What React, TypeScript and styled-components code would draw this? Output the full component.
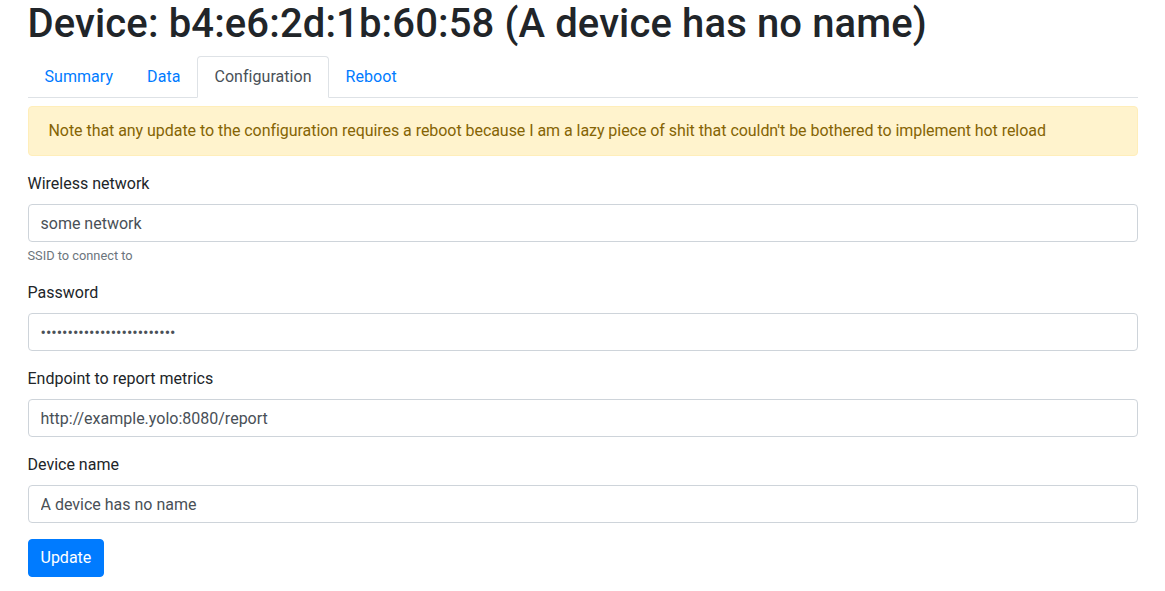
import React from "react";
import styled, { createGlobalStyle } from "styled-components";

const Global = createGlobalStyle`
  html, body { margin: 0; padding: 0; background: #fff; }
  body {
    font-family: Roboto, "Helvetica Neue", Arial, sans-serif;
    font-size: 16px;
    line-height: 1.5;
    color: #212529;
  }
  *, *::before, *::after { box-sizing: border-box; }
`;

const Container = styled.div`
  max-width: 1110px;
  margin: 0 auto;
`;

const Title = styled.h1`
  margin: 0 0 8px;
  font-size: 40px;
  font-weight: 500;
  line-height: 1.2;
  letter-spacing: 0.13px;
`;

const Nav = styled.ul`
  display: flex;
  list-style: none;
  margin: 0;
  padding: 0;
  border-bottom: 1px solid #dee2e6;
`;

const NavItem = styled.li`
  margin-bottom: -1px;
`;

const NavLink = styled.a<{ $active?: boolean }>`
  display: block;
  padding: 8px 16px;
  border: 1px solid transparent;
  border-top-left-radius: 4px;
  border-top-right-radius: 4px;
  text-decoration: none;
  letter-spacing: 0.05px;
  color: ${(p) => (p.$active ? "#495057" : "#007bff")};
  background: ${(p) => (p.$active ? "#fff" : "transparent")};
  border-color: ${(p) => (p.$active ? "#dee2e6 #dee2e6 #fff" : "transparent")};
  cursor: pointer;
`;

const TabContent = styled.div`
  padding-top: 8px;
`;

const Alert = styled.div`
  padding: 12px 20px;
  margin-bottom: 16px;
  border: 1px solid #ffeeba;
  border-radius: 4px;
  background: #fff3cd;
  color: #856404;
  letter-spacing: -0.05px;
`;

const FormGroup = styled.div`
  margin-bottom: 16px;
`;

const Label = styled.label`
  display: inline-block;
  margin-bottom: 8px;
`;

const Input = styled.input`
  display: block;
  width: 100%;
  height: 38px;
  padding: 6px 12px;
  font-family: inherit;
  font-size: 16px;
  line-height: 1.5;
  color: #495057;
  background: #fff;
  border: 1px solid #ced4da;
  border-radius: 4px;
  outline: none;
`;

const Help = styled.small`
  display: block;
  margin-top: 4px;
  font-size: 12.8px;
  color: #6c757d;
`;

const Button = styled.button`
  display: inline-block;
  padding: 6px 12px;
  font-family: inherit;
  font-size: 16px;
  line-height: 1.5;
  color: #fff;
  background: #007bff;
  border: 1px solid #007bff;
  border-radius: 4px;
  cursor: pointer;
`;

const fields = [
  { id: "ssid", label: "Wireless network", value: "some network", type: "text", help: "SSID to connect to" },
  { id: "pw", label: "Password", value: "supersecretpassword123456", type: "password" },
  { id: "endpoint", label: "Endpoint to report metrics", value: "http://example.yolo:8080/report", type: "text" },
  { id: "name", label: "Device name", value: "A device has no name", type: "text" },
];

export default function App() {
  return (
    <Container>
      <Global />
      <Title>Device: b4:e6:2d:1b:60:58 (A device has no name)</Title>
      <Nav>
        <NavItem><NavLink>Summary</NavLink></NavItem>
        <NavItem><NavLink>Data</NavLink></NavItem>
        <NavItem><NavLink $active>Configuration</NavLink></NavItem>
        <NavItem><NavLink>Reboot</NavLink></NavItem>
      </Nav>
      <TabContent>
        <Alert>
          Note that any update to the configuration requires a reboot because I am a lazy piece of shit that couldn't be bothered to implement hot reload
        </Alert>
        <form onSubmit={(e) => e.preventDefault()}>
          {fields.map((f) => (
            <FormGroup key={f.id}>
              <Label htmlFor={f.id}>{f.label}</Label>
              <Input id={f.id} type={f.type} defaultValue={f.value} />
              {f.help && <Help>{f.help}</Help>}
            </FormGroup>
          ))}
          <Button type="submit">Update</Button>
        </form>
      </TabContent>
    </Container>
  );
}
